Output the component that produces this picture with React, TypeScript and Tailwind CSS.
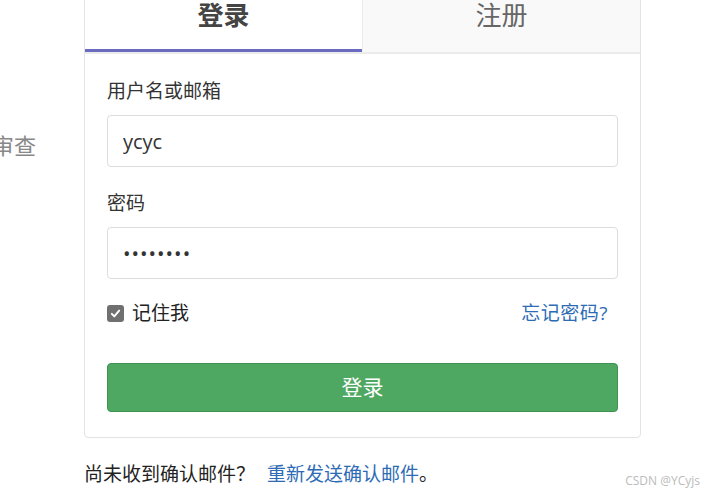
import { useState } from 'react';

const font = { fontFamily: '"Open Sans", "Noto Sans CJK SC", sans-serif' };

export default function App() {
  const [remember, setRemember] = useState(true);
  const [tab, setTab] = useState<'login' | 'register'>('login');

  return (
    <div className="relative h-[496px] w-[712px] overflow-hidden bg-white text-[#333]" style={font}>
      <div className="flex">
        <div className="w-[84px] shrink-0 overflow-hidden">
          <div className="-ml-[8px] mt-[131px] whitespace-nowrap text-[22px] leading-[28px] text-[#888]">审查</div>
        </div>

        <div className="w-[557px] shrink-0">
          <div className="-mt-[20px] rounded border border-[#e3e3e3]">
            <div className="flex h-[73px] border-b-2 border-[#ebebeb]">
              <button
                type="button"
                onClick={() => setTab('login')}
                className={`flex flex-1 items-center justify-center border-b-[3px] text-[26px] ${tab === 'login' ? 'border-[#6b6bbf] bg-white font-bold text-[#444]' : 'border-transparent bg-[#f9f9f9] text-[#666]'}`}
              >
                登录
              </button>
              <button
                type="button"
                onClick={() => setTab('register')}
                className={`flex flex-1 items-center justify-center border-l border-b-[3px] border-l-[#ebebeb] text-[26px] ${tab === 'register' ? 'border-b-[#6b6bbf] bg-white font-bold text-[#444]' : 'border-b-transparent bg-[#f9f9f9] text-[#666]'}`}
              >
                注册
              </button>
            </div>

            <div className="px-[22px] pb-[25px] pt-[24px]">
              <label className="block text-[19px] leading-[26px] text-[#333]">用户名或邮箱</label>
              <input
                defaultValue="ycyc"
                className="mt-[11px] h-[52px] w-full rounded border border-[#ddd] px-[15px] text-[20px] text-[#333] outline-none"
              />

              <label className="mt-[23px] block text-[19px] leading-[26px] text-[#333]">密码</label>
              <input
                type="password"
                defaultValue="12345678"
                className="mt-[11px] h-[52px] w-full rounded border border-[#ddd] px-[15px] text-[20px] tracking-[1px] text-[#333] outline-none"
              />

              <div className="mt-[21px] flex items-center justify-between">
                <label className="flex items-center gap-[8px] text-[19px] leading-[26px] text-[#222]">
                  <button
                    type="button"
                    onClick={() => setRemember(!remember)}
                    className={`flex h-[17px] w-[17px] items-center justify-center rounded-[3px] ${remember ? 'bg-[#707070]' : 'border border-[#999] bg-white'}`}
                  >
                    {remember ? (
                      <svg viewBox="0 0 16 16" className="h-[13px] w-[13px]">
                        <path d="M3.5 8.5l3 3 6-7" fill="none" stroke="white" strokeWidth="2.4" strokeLinecap="round" strokeLinejoin="round" />
                      </svg>
                    ) : null}
                  </button>
                  记住我
                </label>
                <a href="#" className="mr-[10px] text-[19px] leading-[26px] tracking-[0.5px] text-[#2d6cb5]">
                  忘记密码?
                </a>
              </div>

              <button
                type="button"
                className="mt-[37px] flex h-[49px] w-full items-center justify-center rounded border border-[#3f9252] bg-[#4fa862] text-[21px] text-white"
              >
                登录
              </button>
            </div>
          </div>

          <p className="mt-[23px] text-[19px] leading-[26px] text-[#222]">
            尚未收到确认邮件？<a href="#" className="ml-[12px] text-[#2d6cb5]">重新发送确认邮件</a>。
          </p>
        </div>
      </div>

      <div className="absolute bottom-[6px] right-[12px] text-[12px] text-[#bbb]">CSDN @YCyjs</div>
    </div>
  );
}
